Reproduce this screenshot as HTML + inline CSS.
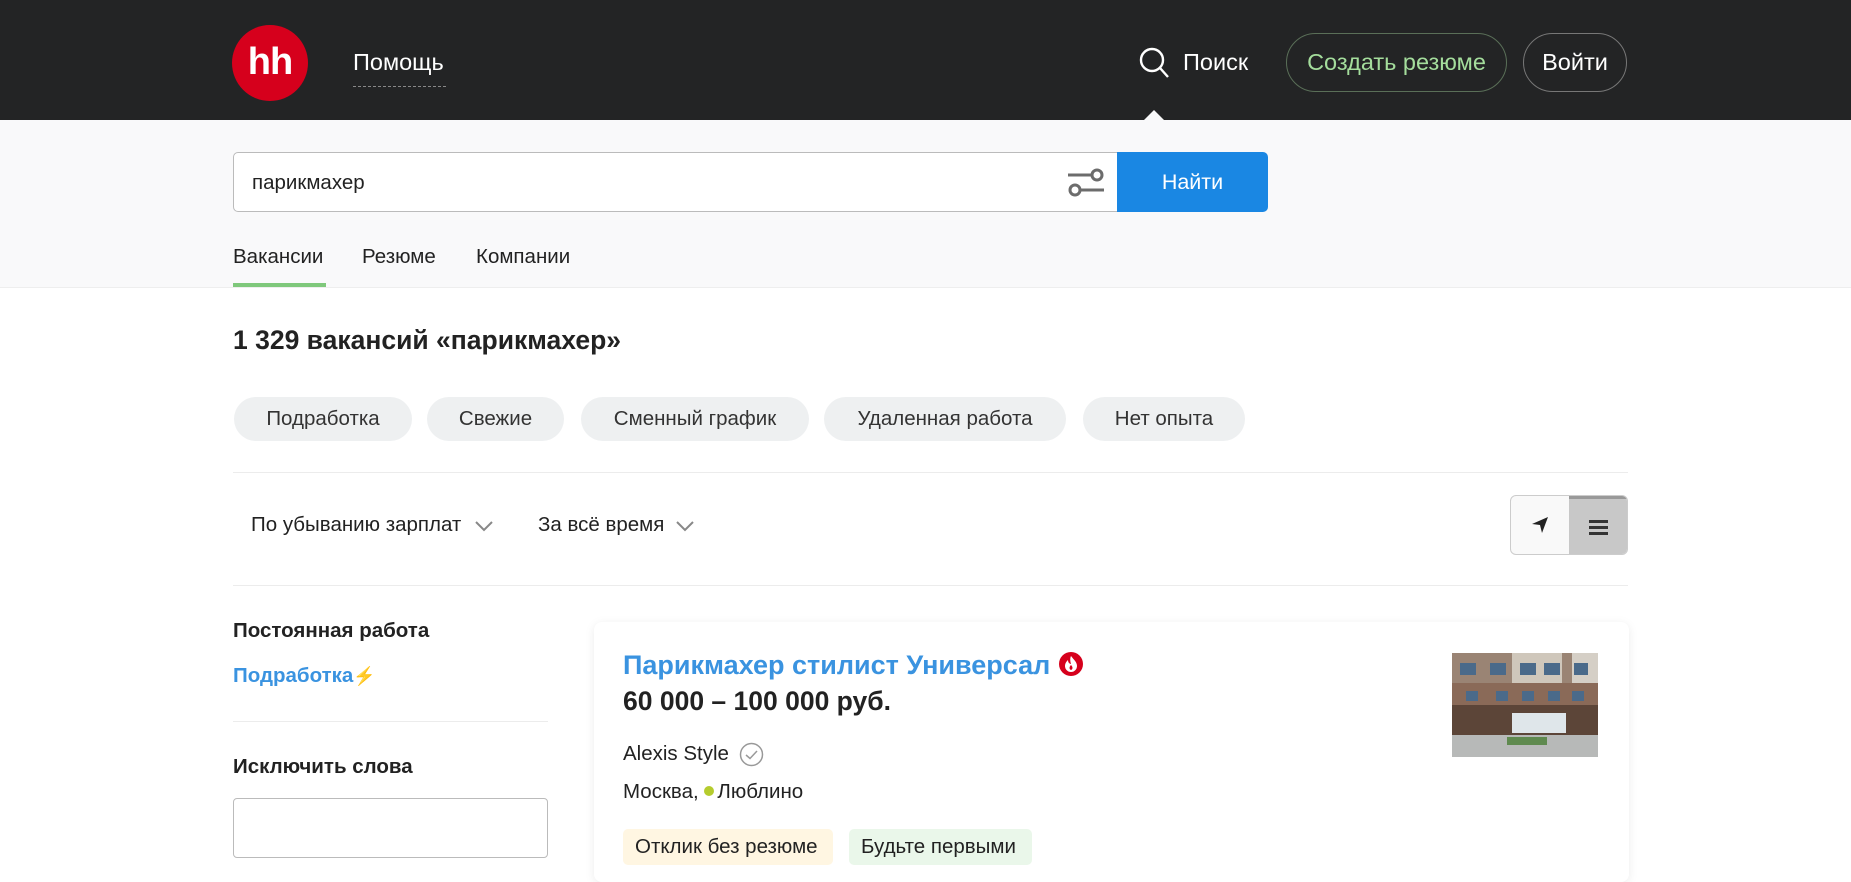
<!DOCTYPE html>
<html><head><meta charset="utf-8"><style>
*{box-sizing:border-box;margin:0;padding:0}
body{width:1851px;height:868px;overflow:hidden;background:#fff;font-family:"Liberation Sans",Arial,sans-serif;color:#222;font-size:21px;position:relative}
.a{position:absolute;white-space:nowrap}
.hdr{position:absolute;left:0;top:0;width:1851px;height:120px;background:#232425}
.band{position:absolute;left:0;top:120px;width:1851px;height:168px;background:#f9f9fa;border-bottom:1px solid #eee}
.chip{position:absolute;top:397px;height:44px;border-radius:22px;background:#eef0f1;font-size:20.5px;line-height:44px;text-align:center;color:#333}
.line{position:absolute;height:1px;background:#ececec}
.tag{position:absolute;top:829px;height:36px;line-height:36px;border-radius:5px;font-size:20.5px;padding:0 12px}
</style></head><body>
<div class="hdr"></div>
<div class="a" style="left:232px;top:25px;width:76px;height:76px;border-radius:50%;background:#d6001c;color:#fff;font-weight:bold;font-size:38px;line-height:74px;text-align:center;letter-spacing:-1px">hh</div>
<div class="a" style="left:353px;top:49px;color:#fff;font-size:23.5px">Помощь</div>
<div class="a" style="left:353px;top:86px;width:93px;border-top:1px dashed #888"></div>
<svg class="a" style="left:1138px;top:46px" width="34" height="36" viewBox="0 0 34 36"><circle cx="14" cy="14" r="11" fill="none" stroke="#fff" stroke-width="2.4"/><line x1="22" y1="22" x2="30" y2="31" stroke="#fff" stroke-width="2.4"/></svg>
<div class="a" style="left:1183px;top:49px;color:#fff;font-size:23.5px">Поиск</div>
<div class="a" style="left:1286px;top:33px;width:221px;height:59px;border:1px solid #5a6f58;border-radius:30px;color:#a4dd9c;font-size:23.5px;line-height:57px;text-align:center">Создать резюме</div>
<div class="a" style="left:1523px;top:33px;width:104px;height:59px;border:1px solid #777;border-radius:30px;color:#fff;font-size:23.5px;line-height:57px;text-align:center">Войти</div>
<div class="band"></div>
<div class="a" style="left:1143px;top:110px;width:0;height:0;border-left:11px solid transparent;border-right:11px solid transparent;border-bottom:11px solid #f9f9fa"></div>
<div class="a" style="left:233px;top:152px;width:886px;height:60px;background:#fff;border:1px solid #bbb;border-radius:5px 0 0 5px"></div>
<div class="a" style="left:252px;top:171px;font-size:20.5px;color:#222">парикмахер</div>
<svg class="a" style="left:1066px;top:166px" width="40" height="34" viewBox="0 0 40 34"><line x1="2" y1="9" x2="26" y2="9" stroke="#6c6c6c" stroke-width="3"/><circle cx="31" cy="9" r="5" fill="#fff" stroke="#6c6c6c" stroke-width="3"/><line x1="14" y1="24" x2="38" y2="24" stroke="#6c6c6c" stroke-width="3"/><circle cx="9" cy="24" r="5" fill="#fff" stroke="#6c6c6c" stroke-width="3"/></svg>
<div class="a" style="left:1117px;top:152px;width:151px;height:60px;background:#1a87e3;border-radius:0 5px 5px 0;color:#fff;font-size:21.5px;line-height:60px;text-align:center">Найти</div>
<div class="a" style="left:233px;top:245px;font-size:20.5px">Вакансии</div>
<div class="a" style="left:233px;top:283px;width:93px;height:4px;background:#7fc87b"></div>
<div class="a" style="left:362px;top:245px;font-size:20.5px">Резюме</div>
<div class="a" style="left:476px;top:245px;font-size:20.5px">Компании</div>
<div class="a" style="left:233px;top:325px;font-size:26.5px;font-weight:bold">1 329 вакансий «парикмахер»</div>
<div class="chip" style="left:234px;width:178px">Подработка</div>
<div class="chip" style="left:427px;width:137px">Свежие</div>
<div class="chip" style="left:581px;width:228px">Сменный график</div>
<div class="chip" style="left:824px;width:242px">Удаленная работа</div>
<div class="chip" style="left:1083px;width:162px">Нет опыта</div>
<div class="line" style="left:233px;top:472px;width:1395px"></div>
<div class="a" style="left:251px;top:513px;font-size:20.5px">По убыванию зарплат</div>
<svg class="a" style="left:474px;top:519px" width="20" height="14"><polyline points="2,3 10,11 18,3" fill="none" stroke="#888" stroke-width="2"/></svg>
<div class="a" style="left:538px;top:513px;font-size:20.5px">За всё время</div>
<svg class="a" style="left:675px;top:519px" width="20" height="14"><polyline points="2,3 10,11 18,3" fill="none" stroke="#888" stroke-width="2"/></svg>
<div class="a" style="left:1510px;top:495px;width:118px;height:60px;border:1px solid #ccc;border-radius:6px;background:#f9f9f9;overflow:hidden"><div style="position:absolute;left:58px;top:0;width:60px;height:60px;background:#c8c8c8;border-top:3px solid #999"></div></div>
<svg class="a" style="left:1530px;top:515px" width="20" height="20" viewBox="0 0 20 20"><path d="M18 2 L2 9 L10 10 L12 18 Z" fill="#222"/></svg>
<div class="a" style="left:1589px;top:520px;width:19px;height:3px;background:#333;box-shadow:0 6px 0 #333,0 12px 0 #333"></div>
<div class="line" style="left:233px;top:585px;width:1395px"></div>
<div class="a" style="left:233px;top:619px;font-size:20.5px;font-weight:bold">Постоянная работа</div>
<div class="a" style="left:233px;top:664px;font-size:20.5px;font-weight:bold;color:#3a93e0">Подработка<span style="color:#f0b81a;font-size:18px">⚡</span></div>
<div class="line" style="left:233px;top:721px;width:315px"></div>
<div class="a" style="left:233px;top:755px;font-size:20.5px;font-weight:bold">Исключить слова</div>
<div class="a" style="left:233px;top:798px;width:315px;height:60px;border:1px solid #bbb;border-radius:4px"></div>
<div class="a" style="left:594px;top:622px;width:1035px;height:260px;background:#fff;border-radius:8px;box-shadow:0 2px 10px rgba(0,0,0,.08)"></div>
<div class="a" style="left:623px;top:650px;font-size:27px;font-weight:bold;color:#3a93e0">Парикмахер стилист Универсал <svg width="26" height="26" viewBox="0 0 26 26" style="vertical-align:-3px"><circle cx="13" cy="13" r="12" fill="#d6001c"/><path d="M13 5 C16 9 19 11 19 15 A6 6 0 0 1 7 15 C7 12 9 10 10 9 C10 12 12 13 13 13 C12 10 12 7 13 5Z" fill="#fff"/><path d="M13 14 C15 16 15 18 13 19 C11 18 11 16 13 14Z" fill="#d6001c"/></svg></div>
<div class="a" style="left:623px;top:686px;font-size:26.5px;font-weight:bold">60 000 – 100 000 руб.</div>
<div class="a" style="left:623px;top:742px;font-size:20.5px">Alexis Style</div>
<svg class="a" style="left:739px;top:742px" width="25" height="25" viewBox="0 0 25 25"><circle cx="12.5" cy="12.5" r="11" fill="none" stroke="#999" stroke-width="1.5"/><polyline points="7,13 11,16.5 18,9" fill="none" stroke="#999" stroke-width="1.5"/></svg>
<div class="a" style="left:623px;top:780px;font-size:20.5px">Москва, <span style="display:inline-block;width:10px;height:10px;border-radius:50%;background:#b5cc2e;vertical-align:2px;margin-right:3px"></span>Люблино</div>
<div class="tag" style="left:623px;width:210px;background:#fff6e2">Отклик без резюме</div>
<div class="tag" style="left:849px;width:183px;background:#eaf7ea">Будьте первыми</div>
<svg class="a" style="left:1452px;top:653px" width="146" height="104" viewBox="0 0 146 104"><rect width="146" height="104" fill="#8a6a58"/><rect x="0" y="0" width="146" height="30" fill="#9a8474"/><rect x="60" y="0" width="50" height="30" fill="#cfc7bb"/><rect x="120" y="0" width="26" height="30" fill="#d5cfc6"/><g fill="#4a6a8a"><rect x="8" y="10" width="16" height="12"/><rect x="38" y="10" width="16" height="12"/><rect x="68" y="10" width="16" height="12"/><rect x="92" y="10" width="16" height="12"/><rect x="122" y="10" width="14" height="12"/><rect x="14" y="38" width="12" height="10"/><rect x="44" y="38" width="12" height="10"/><rect x="70" y="38" width="12" height="10"/><rect x="96" y="38" width="12" height="10"/><rect x="120" y="38" width="12" height="10"/></g><rect x="0" y="52" width="146" height="30" fill="#5c4538"/><rect x="60" y="60" width="54" height="20" fill="#dfe6ea"/><rect x="0" y="82" width="146" height="22" fill="#b7b9b8"/><rect x="55" y="84" width="40" height="8" fill="#5f8a4f"/></svg>
</body></html>
